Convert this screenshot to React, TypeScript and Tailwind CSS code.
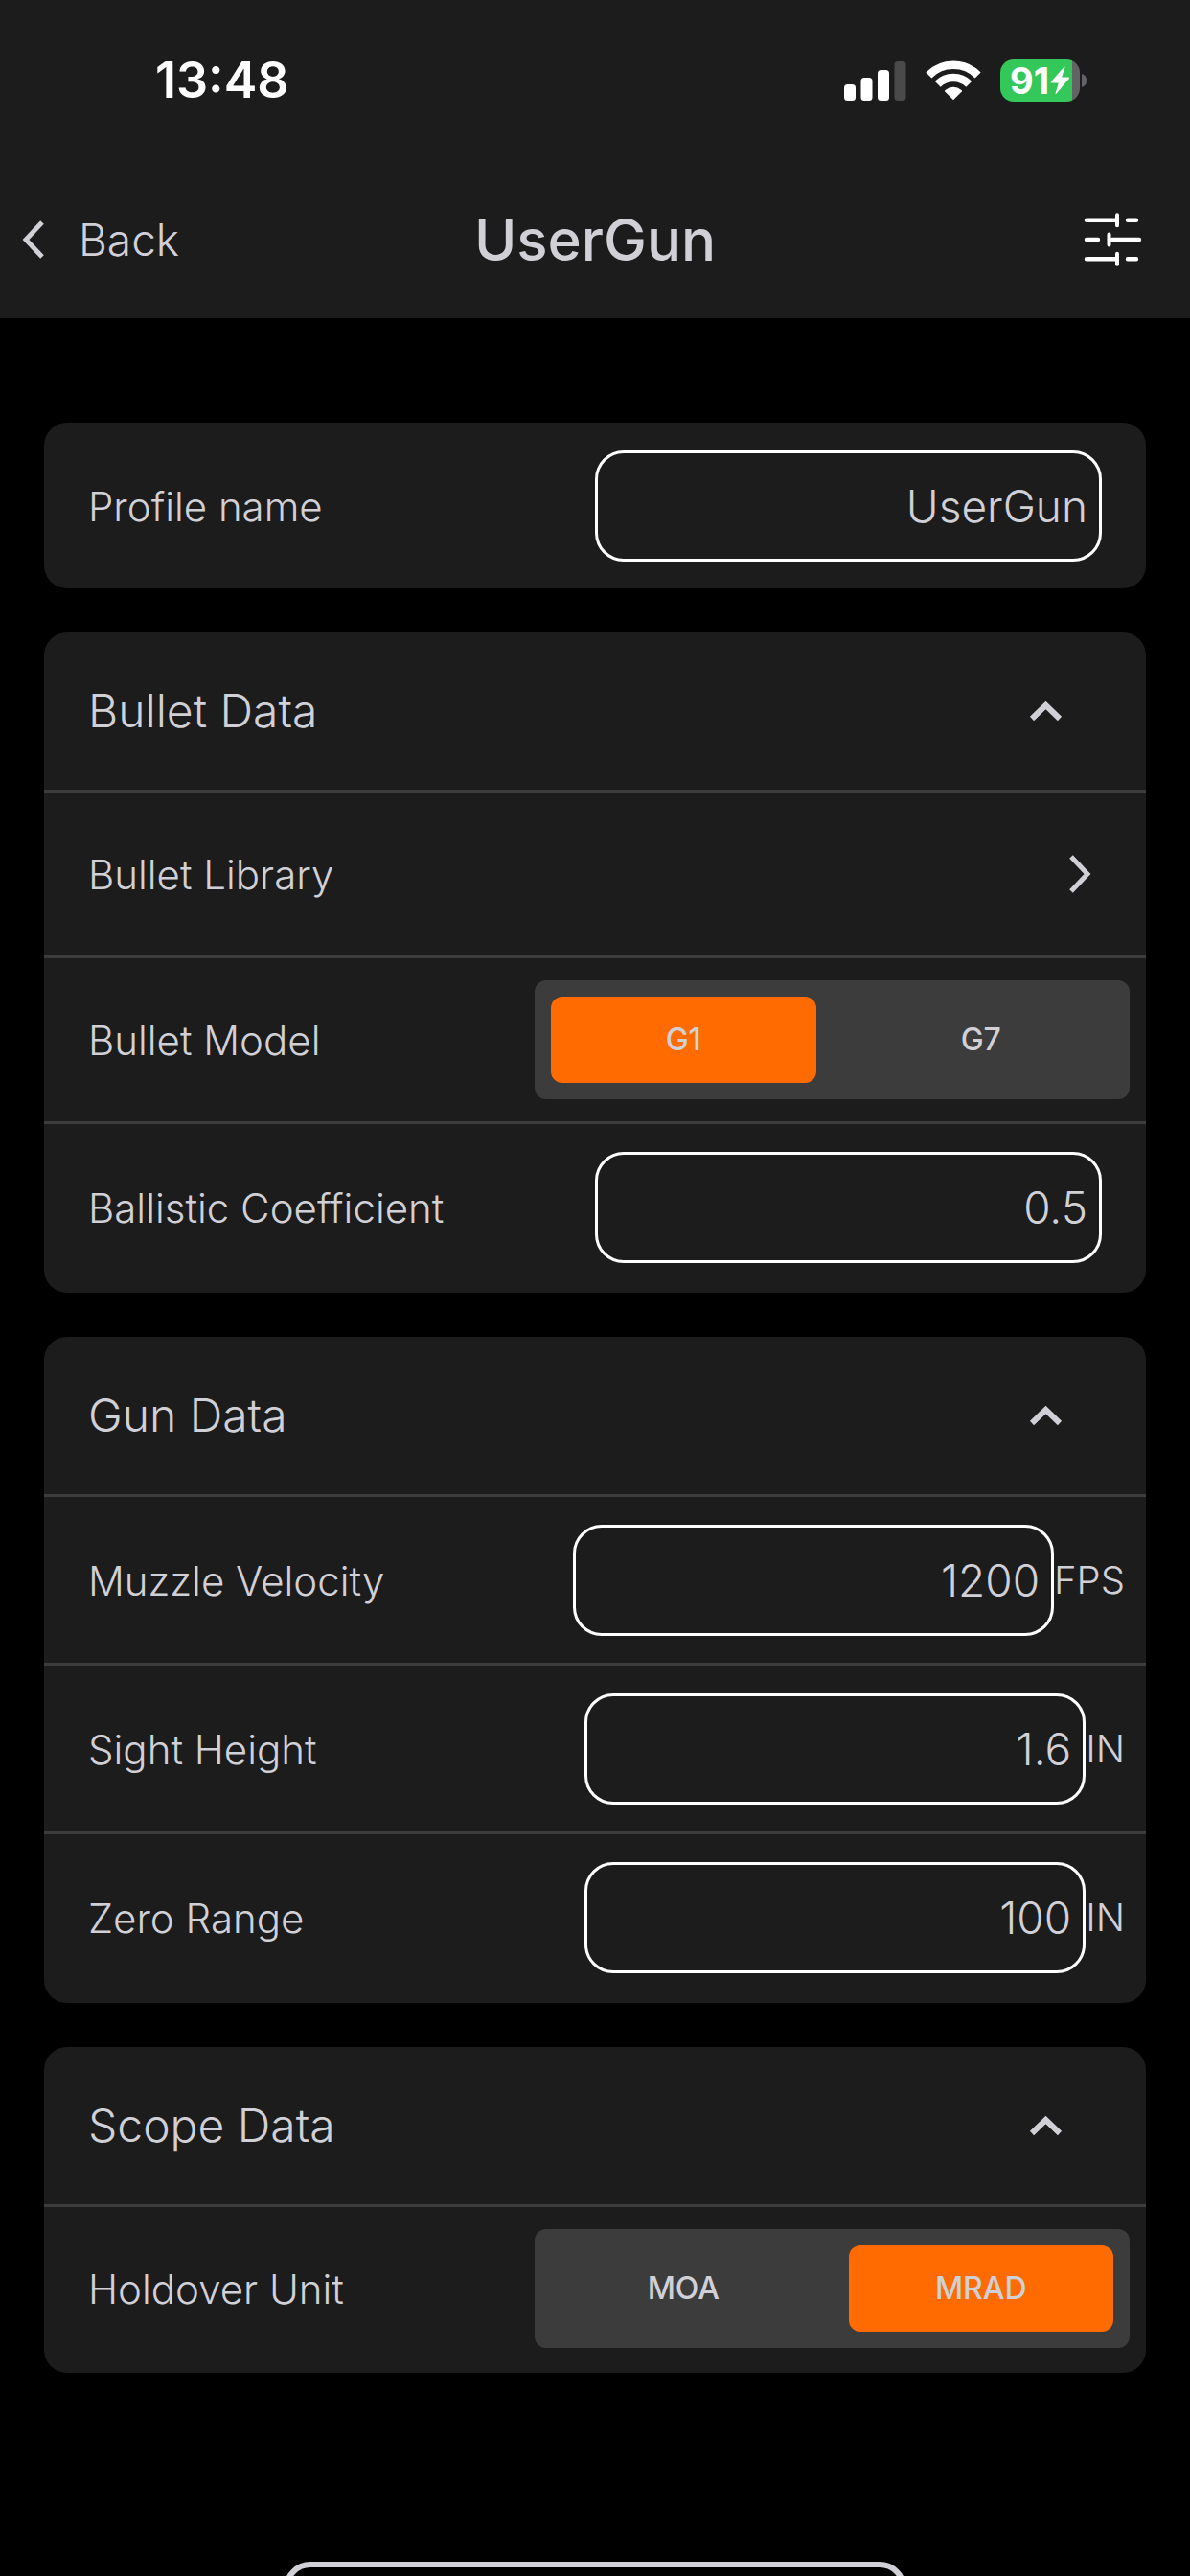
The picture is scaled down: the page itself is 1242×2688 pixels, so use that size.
import React, { useState } from 'react';

interface ChildrenProps {
  children: React.ReactNode;
}

const SignalIcon = () => (
  <svg width="65" height="41" viewBox="0 0 65 41" fill="#ffffff" aria-hidden="true">
    <rect x="0" y="24" width="12" height="17" rx="3.5" />
    <rect x="17.5" y="17" width="12" height="24" rx="3.5" />
    <rect x="35" y="9" width="12" height="32" rx="3.5" />
    <rect x="52.5" y="0" width="12" height="41" rx="3.5" fill="#4a4a4a" />
  </svg>
);

const WifiIcon = () => (
  <svg width="58" height="42" viewBox="0 0 58 42" aria-hidden="true">
    <g fill="none" stroke="#ffffff" strokeWidth="8.5">
      <path d="M3.4 15.4A36.2 36.2 0 0 1 54.6 15.4" />
      <path d="M12.7 24.7A23 23 0 0 1 45.3 24.7" />
    </g>
    <path d="M20.2 31.2Q29 24.4 37.8 31.2Q38.4 31.8 37.8 32.6L29 41.2L20.2 32.6Q19.6 31.8 20.2 31.2Z" fill="#ffffff" />
  </svg>
);

const Battery = () => (
  <div className="flex items-center gap-[2px]">
    <div className="flex h-11 w-[83px] items-center overflow-hidden rounded-[14px] bg-[linear-gradient(to_right,#34c759_75px,#636366_75px)] pl-[10px]">
      <span className="text-[38px] leading-[44px] font-bold text-white">91</span>
      <svg width="22" height="30" viewBox="0 0 22 30" fill="#ffffff" className="shrink-0" aria-hidden="true">
        <path d="M15.6 0.8Q16.6 0 16.4 1.4L13.2 11.6H20.4Q21.6 11.8 20.8 13L7.4 28.8Q6.4 29.6 6.6 28.2L9.8 17.6H2.2Q1 17.4 1.8 16.4Z" />
      </svg>
    </div>
    <svg width="5" height="14" viewBox="0 0 5 14" aria-hidden="true">
      <path d="M0 0Q5 1.5 5 7Q5 12.5 0 14Z" fill="#636366" />
    </svg>
  </div>
);

const SlidersIcon = () => (
  <svg width="62" height="58" viewBox="0 0 62 58" fill="none" stroke="#ffffff" strokeWidth="4.4" strokeLinecap="round" aria-hidden="true">
    <path d="M4 8.7H35M47 8.7H56" />
    <path d="M4 29H16M28 29H59" />
    <path d="M4 49.3H35M47 49.3H56" />
    <path d="M36 3.2V14.2M27.5 23.5V34.5M36 43.8V54.8" strokeWidth="4" />
  </svg>
);

const StatusBar = () => (
  <div className="flex h-[168px] items-center justify-between pr-[108px] pl-[162px]">
    <span className="text-[52px] leading-[60px] font-semibold text-white">13:48</span>
    <div className="flex items-center gap-5">
      <SignalIcon />
      <WifiIcon />
      <Battery />
    </div>
  </div>
);

const Header = () => (
  <header className="bg-[#1c1c1c]">
    <StatusBar />
    <div className="grid h-[164px] grid-cols-[1fr_auto_1fr] items-center px-[22px]">
      <button type="button" className="flex items-center gap-[34px] text-[46px] font-light">
        <svg width="26" height="42" viewBox="0 0 26 42" fill="none" stroke="currentColor" strokeWidth="5" aria-hidden="true">
          <path d="M22 3L5 21L22 39" />
        </svg>
        Back
      </button>
      <h1 className="text-center text-[60px] font-medium">UserGun</h1>
      <button type="button" aria-label="Settings" className="mr-7 justify-self-end">
        <SlidersIcon />
      </button>
    </div>
  </header>
);

const Card = ({ children }: ChildrenProps) => (
  <section className="overflow-hidden rounded-3xl bg-[#1c1c1c]">{children}</section>
);

interface SectionProps extends ChildrenProps {
  title: string;
}

const Section = ({ title, children }: SectionProps) => {
  const [open, setOpen] = useState(true);

  return (
    <Card>
      <h2>
        <button
          type="button"
          aria-expanded={open}
          onClick={() => setOpen(!open)}
          className="flex h-[167px] w-full items-center justify-between border-b-3 border-[#3c3c3c] pr-[87px] pl-[46px] text-[48px] font-light"
        >
          {title}
          <svg
            width="35"
            height="24"
            viewBox="0 0 35 24"
            fill="none"
            stroke="currentColor"
            strokeWidth="6"
            className={open ? '' : 'rotate-180'}
            aria-hidden="true"
          >
            <path d="M3 20L17.5 6L32 20" />
          </svg>
        </button>
      </h2>
      {open && (
        <div className="*:border-b-3 *:border-[#3c3c3c] *:last:border-transparent">{children}</div>
      )}
    </Card>
  );
};

interface FieldProps {
  id: string;
  label: string;
  initial: string;
  unit?: string;
  width?: string;
}

const Field = ({ id, label, initial, unit, width = 'w-1/2 pr-[46px]' }: FieldProps) => {
  const [value, setValue] = useState(initial);

  return (
    <div className="flex items-center pt-[29px] pb-7">
      <label htmlFor={id} className="flex-1 pl-[46px] text-[42px] font-light">
        {label}
      </label>
      <div className={`flex items-center ${width}`}>
        <input
          id={id}
          type="text"
          value={value}
          onChange={(e) => setValue(e.target.value)}
          className="h-[116px] w-full min-w-0 rounded-[30px] border-3 border-white bg-transparent pr-3 text-right text-[46px] font-light outline-none"
        />
        {unit && <span className="text-[40px] font-light">{unit}</span>}
      </div>
    </div>
  );
};

interface ToggleProps {
  name: string;
  label: string;
  options: string[];
  initial: string;
}

const Toggle = ({ name, label, options, initial }: ToggleProps) => {
  const [selected, setSelected] = useState(initial);

  return (
    <div className="flex items-center py-[23px]">
      <span id={name} className="flex-1 pl-[46px] text-[42px] font-light">
        {label}
      </span>
      <div
        role="radiogroup"
        aria-labelledby={name}
        className="mr-[17px] grid w-[54%] grid-cols-2 gap-[34px] rounded-xl bg-[#3c3c3c] p-[17px]"
      >
        {options.map((option) => (
          <label
            key={option}
            className="relative flex h-[90px] items-center justify-center rounded-xl text-[32px] font-medium has-checked:bg-[#ff6b00]"
          >
            <input
              type="radio"
              name={name}
              value={option}
              checked={selected === option}
              onChange={() => setSelected(option)}
              className="sr-only"
            />
            {option}
          </label>
        ))}
      </div>
    </div>
  );
};

const App = () => (
  <div className="flex h-screen flex-col overflow-hidden bg-black font-['Inter',sans-serif] text-[#d1d0d6]">
    <Header />
    <main className="flex flex-col gap-[46px] px-[46px] pt-[109px]">
      <Card>
        <Field id="profile-name" label="Profile name" initial="UserGun" />
      </Card>

      <Section title="Bullet Data">
        <button type="button" className="flex h-[173px] w-full items-center justify-between pr-[56px] pl-[46px] text-[42px] font-light">
          Bullet Library
          <svg width="26" height="42" viewBox="0 0 26 42" fill="none" stroke="currentColor" strokeWidth="5" aria-hidden="true">
            <path d="M4 3L21 21L4 39" />
          </svg>
        </button>
        <Toggle name="bullet-model" label="Bullet Model" options={['G1', 'G7']} initial="G1" />
        <Field id="ballistic-coefficient" label="Ballistic Coefficient" initial="0.5" />
      </Section>

      <Section title="Gun Data">
        <Field id="muzzle-velocity" label="Muzzle Velocity" initial="1200" unit="FPS" width="w-[52%] pr-[22px]" />
        <Field id="sight-height" label="Sight Height" initial="1.6" unit="IN" width="w-[51%] pr-[22px]" />
        <Field id="zero-range" label="Zero Range" initial="100" unit="IN" width="w-[51%] pr-[22px]" />
      </Section>

      <Section title="Scope Data">
        <Toggle name="holdover-unit" label="Holdover Unit" options={['MOA', 'MRAD']} initial="MRAD" />
      </Section>
    </main>

    {/* Save button starts just above the fold */}
    <button
      type="button"
      aria-label="Save profile"
      className="mx-auto mt-[197px] h-[140px] w-[650px] shrink-0 rounded-[28px] border-[6px] border-[#d1d0d6]"
    />
  </div>
);

export default App;
